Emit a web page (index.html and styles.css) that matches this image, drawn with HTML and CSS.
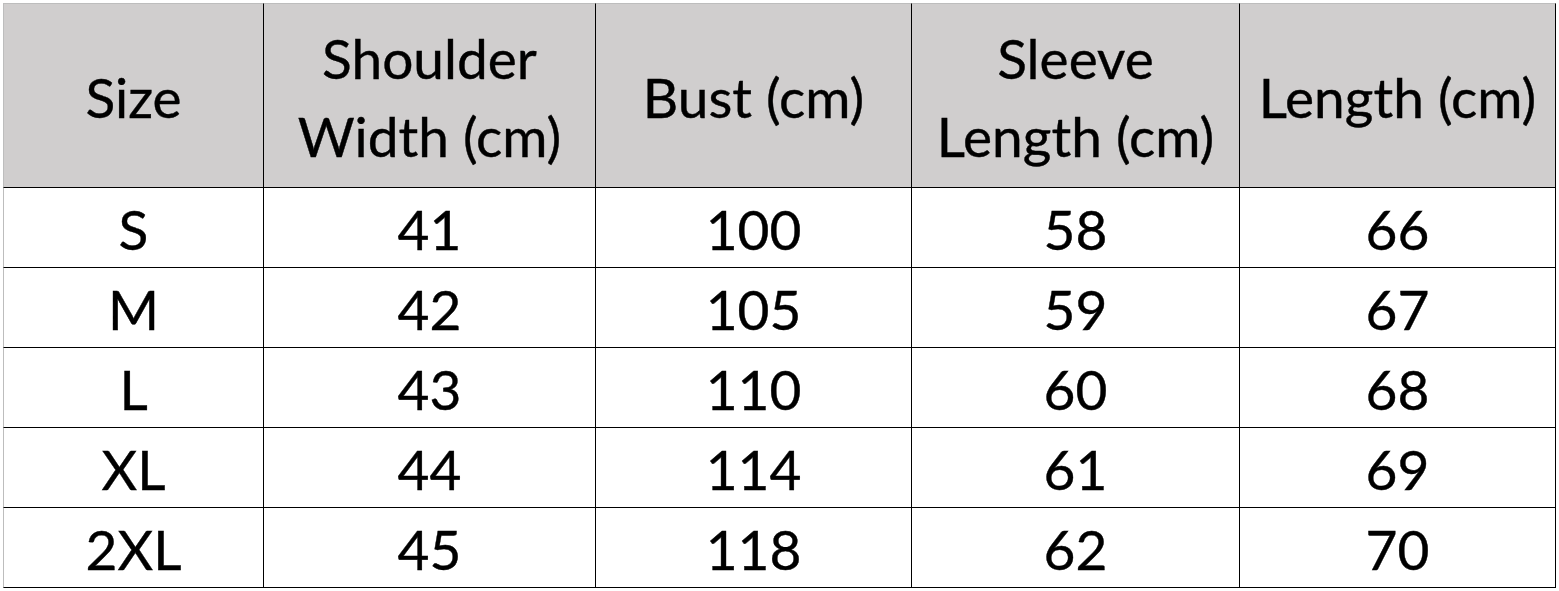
FILE: index.html
```html
<!DOCTYPE html>
<html lang="en">
<head>
<meta charset="utf-8">
<title>Size Chart</title>
<link rel="stylesheet" href="styles.css">
</head>
<body>
<div class="chart" role="table">
  <div class="cell head first top" role="columnheader">Size</div>
  <div class="cell head top" role="columnheader">Shoulder<br>Width (cm)</div>
  <div class="cell head top" role="columnheader">Bust (cm)</div>
  <div class="cell head top" role="columnheader">Sleeve<br>Length (cm)</div>
  <div class="cell head top" role="columnheader">Length (cm)</div>

  <div class="cell first">S</div><div class="cell">41</div><div class="cell">100</div><div class="cell">58</div><div class="cell">66</div>
  <div class="cell first">M</div><div class="cell">42</div><div class="cell">105</div><div class="cell">59</div><div class="cell">67</div>
  <div class="cell first">L</div><div class="cell">43</div><div class="cell">110</div><div class="cell">60</div><div class="cell">68</div>
  <div class="cell first">XL</div><div class="cell">44</div><div class="cell">114</div><div class="cell">61</div><div class="cell">69</div>
  <div class="cell first">2XL</div><div class="cell">45</div><div class="cell">118</div><div class="cell">62</div><div class="cell">70</div>
</div>
</body>
</html>
```

FILE: styles.css
```css
html, body {
  margin: 0;
  padding: 0;
  background: #ffffff;
}

body {
  font-family: Lato, "Open Sans", "Liberation Sans", sans-serif;
  color: #000000;
}

.chart {
  display: grid;
  grid-template-columns: 261px 332px 316px 328px 316px;
  grid-template-rows: 185px repeat(5, 80px);
  margin: 3px 0 0 3px;
  width: max-content;
}

.cell {
  box-sizing: border-box;
  display: flex;
  align-items: center;
  justify-content: center;
  text-align: center;
  font-size: 55px;
  line-height: 78px;
  padding-top: 2px;
  -webkit-text-stroke: 0.4px #000000;
  border-right: 1px solid #000000;
  border-bottom: 1px solid #000000;
}

.head {
  background: #d0cece;
}

.first {
  border-left: 1px solid #bdbdbd;
}

.top {
  border-top: 1px solid #bdbdbd;
}
```
